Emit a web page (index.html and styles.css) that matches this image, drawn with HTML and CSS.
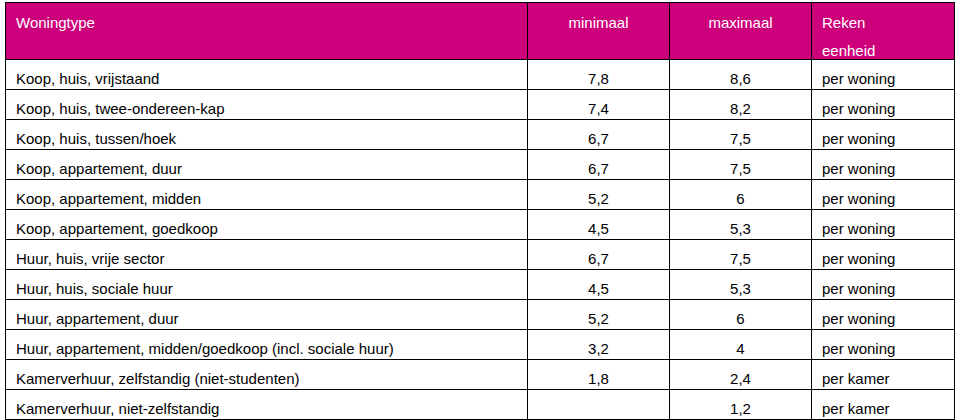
FILE: index.html
```html
<!DOCTYPE html>
<html lang="nl">
<head>
<meta charset="utf-8">
<title>Woningtype tabel</title>
<link rel="stylesheet" href="styles.css">
</head>
<body>
<table class="tbl">
  <colgroup>
    <col class="c-type">
    <col class="c-num">
    <col class="c-num">
    <col class="c-unit">
  </colgroup>
  <thead>
    <tr>
      <th class="left"><div class="hcell">Woningtype</div></th>
      <th class="center"><div class="hcell">minimaal</div></th>
      <th class="center"><div class="hcell">maximaal</div></th>
      <th class="left"><div class="hcell">Reken<br>eenheid</div></th>
    </tr>
  </thead>
  <tbody>
    <tr><td>Koop, huis, vrijstaand</td><td class="center">7,8</td><td class="center">8,6</td><td>per woning</td></tr>
    <tr><td>Koop, huis, twee-ondereen-kap</td><td class="center">7,4</td><td class="center">8,2</td><td>per woning</td></tr>
    <tr><td>Koop, huis, tussen/hoek</td><td class="center">6,7</td><td class="center">7,5</td><td>per woning</td></tr>
    <tr><td>Koop, appartement, duur</td><td class="center">6,7</td><td class="center">7,5</td><td>per woning</td></tr>
    <tr><td>Koop, appartement, midden</td><td class="center">5,2</td><td class="center">6</td><td>per woning</td></tr>
    <tr><td>Koop, appartement, goedkoop</td><td class="center">4,5</td><td class="center">5,3</td><td>per woning</td></tr>
    <tr><td>Huur, huis, vrije sector</td><td class="center">6,7</td><td class="center">7,5</td><td>per woning</td></tr>
    <tr><td>Huur, huis, sociale huur</td><td class="center">4,5</td><td class="center">5,3</td><td>per woning</td></tr>
    <tr><td>Huur, appartement, duur</td><td class="center">5,2</td><td class="center">6</td><td>per woning</td></tr>
    <tr><td>Huur, appartement, midden/goedkoop (incl. sociale huur)</td><td class="center">3,2</td><td class="center">4</td><td>per woning</td></tr>
    <tr><td>Kamerverhuur, zelfstandig (niet-studenten)</td><td class="center">1,8</td><td class="center">2,4</td><td>per kamer</td></tr>
    <tr><td>Kamerverhuur, niet-zelfstandig</td><td class="center"></td><td class="center">1,2</td><td>per kamer</td></tr>
  </tbody>
</table>
</body>
</html>
```
FILE: styles.css
```css
html, body {
  margin: 0;
  padding: 0;
  background: #ffffff;
}

body {
  padding: 2px 0 0 5px;
  font-family: "Liberation Sans", Arial, sans-serif;
  font-size: 15px;
  color: #000000;
}

.tbl {
  border-collapse: collapse;
  table-layout: fixed;
  width: 949px;
}

.c-type { width: 522px; }
.c-num { width: 142px; }
.c-unit { width: 143px; }

.tbl th,
.tbl td {
  border: 1px solid #000000;
  padding: 9px 10px 0 10px;
  line-height: 20px;
  height: 20px;
  vertical-align: top;
  white-space: nowrap;
  text-align: left;
}

.tbl th {
  background: #cc007a;
  color: #ffffff;
  font-weight: normal;
  padding-top: 6px;
  height: 50px;
}

.hcell {
  height: 50px;
  line-height: 28px;
  overflow: visible;
}

.tbl .center {
  text-align: center;
}

.tbl .left {
  text-align: left;
}
```
